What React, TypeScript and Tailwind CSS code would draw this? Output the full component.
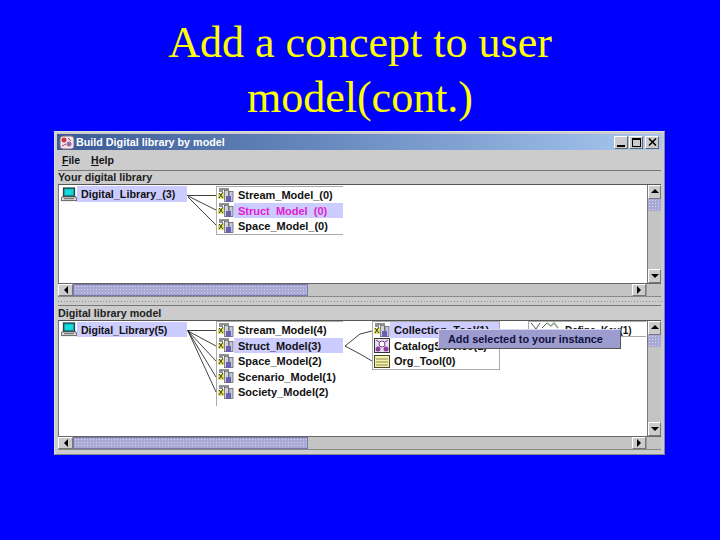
const uiFont = "font-['Liberation_Sans',Arial,sans-serif]";

const dots =
  'bg-[#a9a9d6] bg-[radial-gradient(#d4d4ee_0.7px,transparent_0.8px)] bg-[length:3px_3px]';

function MonitorIcon() {
  return (
    <svg width="16" height="15" viewBox="0 0 17 15" className="shrink-0">
      <rect x="2.5" y="0.5" width="12" height="9" fill="#0f8f96" stroke="#1c2f3c" />
      <rect x="4" y="2" width="9" height="6" fill="#19d9d9" />
      <path d="M1 10h15l1 4H0z" fill="#e4e4e4" stroke="#333" strokeWidth="0.8" />
      <path d="M3 12h11" stroke="#555" strokeWidth="1" />
    </svg>
  );
}

function ModelIcon() {
  return (
    <svg width="16" height="15" viewBox="0 0 16 15" className="shrink-0">
      <path d="M1 1h10M1 3h4" stroke="#222" strokeWidth="1" />
      <path d="M0 5h6v6H0z" fill="#e5e36a" />
      <path d="M1 5l4 5M5 4L1 10" stroke="#333" strokeWidth="1" />
      <rect x="6.5" y="2.5" width="4" height="11" fill="#d4d4dc" stroke="#555" strokeWidth="0.7" />
      <rect x="11" y="3.5" width="4" height="10" fill="#c4c4e0" stroke="#555" strokeWidth="0.7" />
      <rect x="8" y="8" width="5" height="6" fill="#6a5fb0" />
    </svg>
  );
}

function CatalogIcon() {
  return (
    <svg width="16" height="15" viewBox="0 0 16 15" className="shrink-0">
      <rect x="0.5" y="0.5" width="15" height="14" fill="#e9dff0" stroke="#333" />
      <circle cx="8" cy="6" r="3" fill="#fff" stroke="#7a3c8c" />
      <circle cx="4" cy="11" r="2.5" fill="#8a3f9c" />
      <circle cx="12" cy="11" r="2.5" fill="#8a3f9c" />
      <path d="M2 2l3 2M14 2l-3 2" stroke="#7a3c8c" />
    </svg>
  );
}

function NoteIcon() {
  return (
    <svg width="16" height="15" viewBox="0 0 16 15" className="shrink-0">
      <rect x="0.5" y="1.5" width="15" height="12" fill="#f7f0a8" stroke="#4a4a33" />
      <path d="M2 5h12M2 8h12M2 11h12" stroke="#8a8a55" />
    </svg>
  );
}

function ToolIcon() {
  return (
    <svg width="30" height="15" viewBox="0 0 30 15" className="shrink-0">
      <path d="M1 1l5 6 4-6M12 6l5-5" fill="none" stroke="#555" />
      <path d="M17 1l4 3 3-3 4 5" fill="none" stroke="#8aa58a" strokeWidth="1.5" />
    </svg>
  );
}

function Node({
  icon,
  label,
  selected,
  color,
  h = 'h-[15px]',
  w = 'w-[126px]',
}: {
  icon: React.ReactNode;
  label: string;
  selected?: boolean;
  color?: string;
  h?: string;
  w?: string;
}) {
  return (
    <div className={`flex items-center ${h} ${w} pl-[1px]`}>
      {icon}
      <span
        className={`h-full flex-1 pl-[4px] whitespace-nowrap leading-[17px] ${selected ? 'bg-[#ccccff]' : ''} ${color ?? 'text-[#111]'}`}
      >
        {label}
      </span>
    </div>
  );
}

function ArrowBtn({ dir, className }: { dir: 'up' | 'down' | 'left' | 'right'; className?: string }) {
  const points = {
    up: '1,6 5,2 9,6',
    down: '1,3 5,7 9,3',
    left: '7,1 3,5 7,9',
    right: '3,1 7,5 3,9',
  }[dir];
  return (
    <div className={`flex items-center justify-center bg-[#cccccc] border-t border-l border-white border-r border-b border-r-[#777] border-b-[#777] ${className ?? ''}`}>
      <svg width="10" height="10" viewBox="0 0 10 10">
        <polygon points={points} fill="#000" />
      </svg>
    </div>
  );
}

function VScroll() {
  return (
    <div className="w-[14px] flex flex-col bg-[#c4c4c4] border-l border-[#777]">
      <ArrowBtn dir="up" className="h-[14px] shrink-0" />
      <div className={`h-[12px] shrink-0 ${dots}`} />
      <div className="flex-1" />
      <ArrowBtn dir="down" className="h-[14px] shrink-0" />
    </div>
  );
}

function HScroll() {
  return (
    <div className="h-[14px] flex bg-[#c4c4c4] border-t border-[#666] border-b border-b-[#888]">
      <ArrowBtn dir="left" className="w-[15px] shrink-0" />
      <div className={`w-[235px] shrink-0 border border-[#7777aa] ${dots}`} />
      <div className="flex-1" />
      <ArrowBtn dir="right" className="w-[14px] shrink-0" />
      <div className="w-[15px] shrink-0 border-l border-[#999]" />
    </div>
  );
}

function Links({ paths }: { paths: string[] }) {
  return (
    <svg className="absolute left-0 top-0 w-full h-full pointer-events-none">
      {paths.map((d) => (
        <path key={d} d={d} fill="none" stroke="#111" strokeWidth="0.8" />
      ))}
    </svg>
  );
}

export default function App() {
  return (
    <div className={`w-[720px] h-[540px] bg-[#0000ff] overflow-hidden flex flex-col ${uiFont}`}>
      <h1 className="pt-[15px] h-[131px] text-center text-[44px] leading-[55px] text-[#ffff00] font-['Liberation_Serif','Times_New_Roman',serif]">
        Add a concept to user
        <br />
        model(cont.)
      </h1>

      <div className="ml-[54px] w-[611px] h-[324px] bg-[#cccccc] border border-[#dddddd] border-r-[#888] border-b-[#888] pt-[2px] px-[2px] flex flex-col text-[11px] font-bold text-[#111]">
        {/* title bar */}
        <div className="h-[16px] shrink-0 flex items-center pl-[2px] pr-[3px] bg-gradient-to-r from-[#3a5a96] to-[#a8c8f0]">
          <svg width="16" height="15" viewBox="0 0 16 15" className="shrink-0">
            <rect x="1" y="1" width="14" height="13" rx="3" fill="#f2e6ea" stroke="#8a6a80" />
            <circle cx="5" cy="5" r="2.5" fill="#c63a4a" />
            <circle cx="10" cy="9" r="2.5" fill="#9a6ab0" />
            <path d="M3 11l4-2M9 3l3 3" stroke="#b03a50" />
          </svg>
          <span className="ml-[1px] flex-1 text-white text-[10.75px] leading-none">Build Digital library by model</span>
          <div className="w-[14px] h-[13px] mr-[1px] bg-[#cccccc] border border-white border-r-[#666] border-b-[#666] flex items-end justify-center pb-[1px]">
            <div className="w-[8px] h-[2px] bg-black" />
          </div>
          <div className="w-[14px] h-[13px] mr-[2px] bg-[#cccccc] border border-white border-r-[#666] border-b-[#666] flex items-center justify-center">
            <div className="w-[9px] h-[9px] border border-black border-t-2" />
          </div>
          <div className="w-[14px] h-[13px] bg-[#cccccc] border border-white border-r-[#666] border-b-[#666] flex items-center justify-center">
            <svg width="9" height="8" viewBox="0 0 9 8">
              <path d="M1 0.5l7 7M8 0.5l-7 7" stroke="#000" strokeWidth="1.5" />
            </svg>
          </div>
        </div>

        {/* menu */}
        <div className="h-[20px] shrink-0 flex items-center gap-[11px] pl-[5px] pt-[1px] text-[10.5px]">
          <span>
            <span className="underline decoration-1 underline-offset-1">F</span>ile
          </span>
          <span>
            <span className="underline decoration-1 underline-offset-1">H</span>elp
          </span>
        </div>

        {/* upper pane */}
        <div className="mx-[1px] flex flex-col">
          <div className="h-[15px] flex items-center border-t border-[#777] border-b border-b-[#555] text-[10.75px] text-[#222]">
            Your digital library
          </div>
          <div className="h-[98px] flex border-l border-[#777]">
            <div className="relative flex-1 bg-white flex items-start pl-[1px]">
              <Links paths={['M128 10.5H157', 'M129 11L157 25', 'M129 12L157 40']} />
              <div className="mt-[1px] text-[10.75px]">
                <Node icon={<MonitorIcon />} label="Digital_Library_(3)" selected w="w-[127px]" h="h-[16px]" />
              </div>
              <div className="ml-[29px] mt-[1px] w-[127px] h-[49px] border-l border-t border-b border-[#aaaaaa] flex flex-col">
                <Node icon={<ModelIcon />} label="Stream_Model_(0)" h="h-[16px]" />
                <Node icon={<ModelIcon />} label={'Struct\u00a0\u00a0Model\u00a0\u00a0(0)'} selected color="text-[#e020d0]" />
                <Node icon={<ModelIcon />} label="Space_Model_(0)" h="h-[16px]" />
              </div>
            </div>
            <VScroll />
          </div>
          <HScroll />
        </div>

        {/* divider */}
        <div className="h-[8px] shrink-0 flex items-center">
          <div className="w-full h-[3px] bg-[radial-gradient(#8a8a8a_0.7px,transparent_0.8px)] bg-[length:3px_3px]" />
        </div>

        {/* lower pane */}
        <div className="mx-[1px] flex flex-col">
          <div className="h-[16px] flex items-center border-t border-[#777] border-b border-b-[#555] text-[10.75px] text-[#222]">
            Digital library model
          </div>
          <div className="relative h-[115px] flex border-l border-[#777]">
            <div className="relative flex-1 bg-white flex items-start pl-[1px]">
              <Links
                paths={[
                  'M128 9.5H157',
                  'M129 10L157 25',
                  'M129 10L157 40',
                  'M129 10L157 56',
                  'M129 10L157 71',
                  'M286 25L301 13L313 10',
                  'M286 25L301 33L313 40',
                ]}
              />
              <div className="mt-[1px] text-[10.5px]">
                <Node icon={<MonitorIcon />} label="Digital_Library(5)" selected w="w-[127px]" />
              </div>
              <div className="ml-[29px] w-[127px] h-[85px] border-l border-t border-[#aaaaaa] flex flex-col">
                <Node icon={<ModelIcon />} label="Stream_Model(4)" h="h-[16px]" />
                <Node icon={<ModelIcon />} label="Struct_Model(3)" selected />
                <Node icon={<ModelIcon />} label="Space_Model(2)" h="h-[16px]" />
                <Node icon={<ModelIcon />} label="Scenario_Model(1)" />
                <Node icon={<ModelIcon />} label="Society_Model(2)" h="h-[16px]" />
              </div>
              <div className="ml-[29px] w-[128px] h-[49px] border border-[#aaaaaa] flex flex-col">
                <Node icon={<ModelIcon />} label="Collection_Tool(1)" selected h="h-[16px]" />
                <Node icon={<CatalogIcon />} label="CatalogService(1)" />
                <Node icon={<NoteIcon />} label="Org_Tool(0)" h="h-[16px]" />
              </div>
              <div className="ml-[28px] w-[118px] h-[16px] border-l border-t border-b border-[#aaaaaa] flex items-center pl-[1px]">
                <ToolIcon />
                <span className="ml-[5px] pt-[3px] text-[10px] text-[#111] whitespace-nowrap">Define_Key(1)</span>
              </div>
            </div>
            <VScroll />
            <div className="absolute left-[379px] top-[8px] w-[183px] h-[20px] bg-[#9c9cce] border-t border-l border-[#d8d8ee] border-r border-b border-r-[#555] border-b-[#555] flex items-center pl-[9px] text-[#101040] text-[10.9px]">
              Add selected to your instance
            </div>
          </div>
          <HScroll />
        </div>
      </div>
    </div>
  );
}
